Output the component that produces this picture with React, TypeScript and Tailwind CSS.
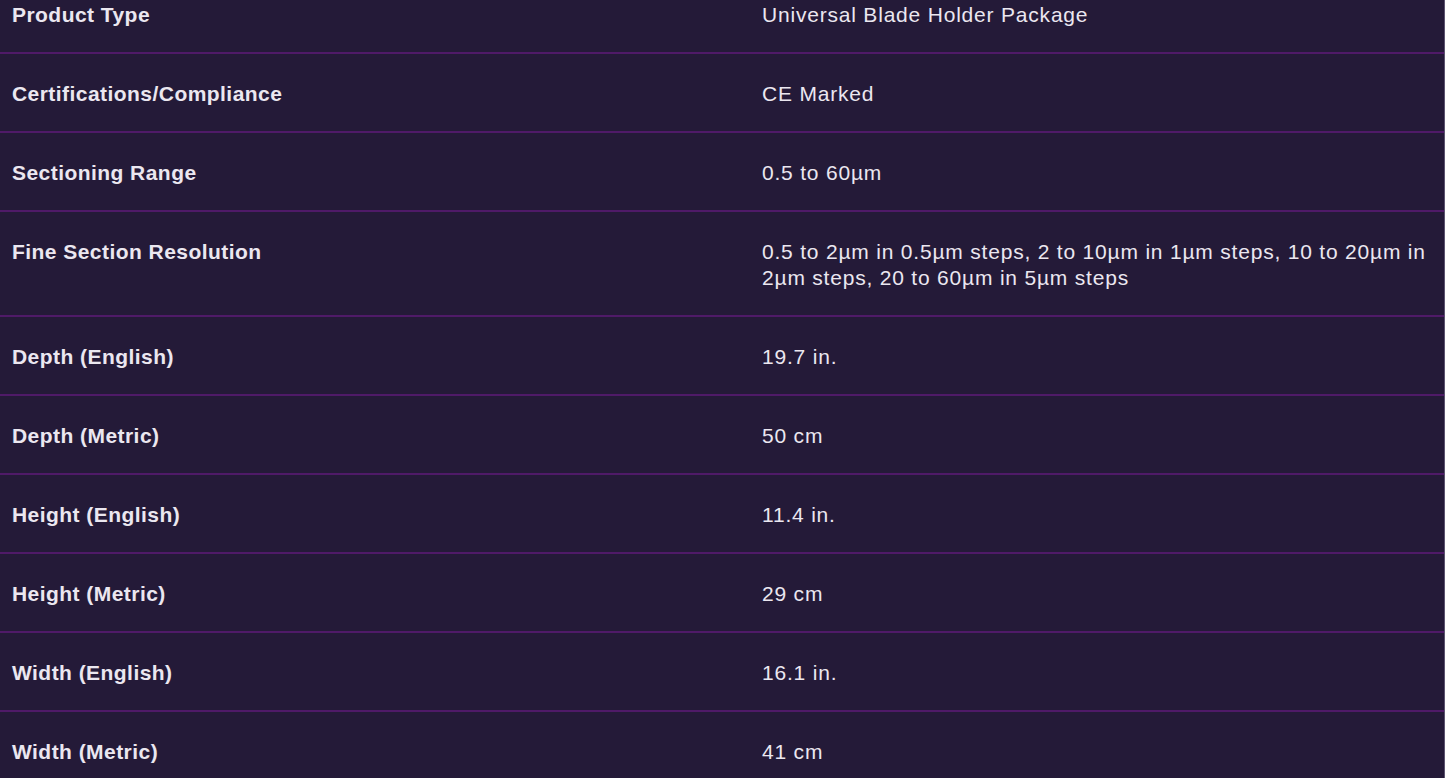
const specs: [string, string][] = [
  ["Product Type", "Universal Blade Holder Package"],
  ["Certifications/Compliance", "CE Marked"],
  ["Sectioning Range", "0.5 to 60µm"],
  [
    "Fine Section Resolution",
    "0.5 to 2µm in 0.5µm steps, 2 to 10µm in 1µm steps, 10 to 20µm in 2µm steps, 20 to 60µm in 5µm steps",
  ],
  ["Depth (English)", "19.7 in."],
  ["Depth (Metric)", "50 cm"],
  ["Height (English)", "11.4 in."],
  ["Height (Metric)", "29 cm"],
  ["Width (English)", "16.1 in."],
  ["Width (Metric)", "41 cm"],
];

const App = () => {
  return (
    <div className="h-[778px] w-full overflow-hidden border-r border-[#5d5470] bg-[#241a38] font-['Liberation_Sans',Arial,sans-serif] text-[#ebe7f0]">
      <div className="-mt-[25px]">
        {specs.map(([label, value], i) => (
          <div key={i} className="grid grid-cols-[762px_1fr] border-b-2 border-[#4f1a68] pt-[27px] pb-[24px] text-[21px] leading-[26px]">
            <div className="pl-3 font-semibold tracking-[0.45px]">{label}</div>
            <div className="pr-3 tracking-[0.8px]">{value}</div>
          </div>
        ))}
      </div>
    </div>
  );
};

export default App;
